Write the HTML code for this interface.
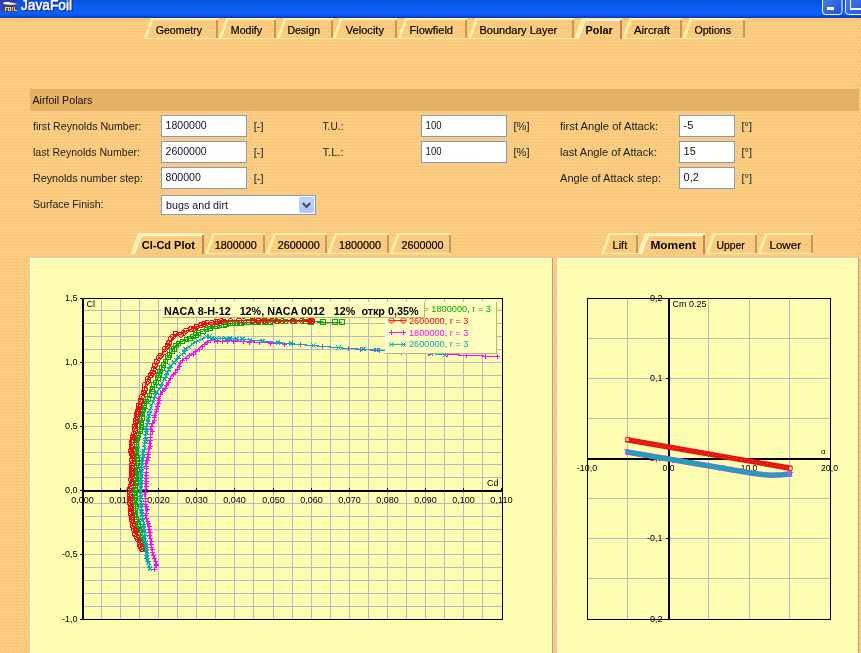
<!DOCTYPE html>
<html><head><meta charset="utf-8"><title>JavaFoil</title>
<style>html,body{margin:0;padding:0;background:#fccd80;overflow:hidden}svg{display:block;will-change:transform;opacity:0.9999}text{white-space:pre}</style>
</head><body>
<svg width="861" height="653" viewBox="0 0 861 653" font-family="'Liberation Sans', sans-serif" shape-rendering="crispEdges">
<defs>
<pattern id="dots" width="4" height="6" patternUnits="userSpaceOnUse"><rect width="4" height="6" fill="#fccd80"/><rect x="0" y="1" width="1" height="1" fill="#e8b870"/><rect x="2" y="4" width="1" height="1" fill="#e8b870"/></pattern>
<linearGradient id="tb" x1="0" y1="0" x2="0" y2="1"><stop offset="0" stop-color="#0650dc"/><stop offset="0.35" stop-color="#0a5cf0"/><stop offset="0.75" stop-color="#0b60f6"/><stop offset="0.88" stop-color="#0a50e0"/><stop offset="1" stop-color="#0634c0"/></linearGradient>
<linearGradient id="btn" x1="0" y1="0" x2="1" y2="1"><stop offset="0" stop-color="#4b84f0"/><stop offset="1" stop-color="#1c4fd8"/></linearGradient>
</defs>
<rect width="861" height="653" fill="url(#dots)"/>
<rect x="0" y="0" width="861" height="18" fill="url(#tb)"/>
<rect x="1" y="0" width="16" height="12" fill="#3b3f9c"/>
<path d="M2.9,3.4 C3.4,1.7 9,1.5 12,2.7 L16.4,3.7 L16.4,4.5 C12,4.7 6,5.1 2.9,3.4 Z" fill="#fff" shape-rendering="auto"/>
<g fill="#ffd21e"><rect x="5" y="7" width="1" height="4"/><rect x="6" y="7" width="2" height="1"/><rect x="6" y="9" width="1" height="1"/><rect x="8" y="7" width="3" height="1"/><rect x="8" y="10" width="3" height="1"/><rect x="8" y="8" width="1" height="2"/><rect x="10" y="8" width="1" height="2"/><rect x="12" y="7" width="1" height="4"/><rect x="14" y="7" width="1" height="4"/><rect x="15" y="10" width="2" height="1"/></g>
<text x="22" y="10.7" font-size="14" font-weight="normal" fill="#0a1f7a" text-anchor="start" textLength="51" lengthAdjust="spacingAndGlyphs" stroke="#0a1f7a" stroke-width="0.5">JavaFoil</text>
<text x="21" y="9.9" font-size="14" font-weight="normal" fill="#fff" text-anchor="start" textLength="51" lengthAdjust="spacingAndGlyphs" stroke="#fff" stroke-width="0.55">JavaFoil</text>
<rect x="822.5" y="-6" width="19.5" height="20.5" rx="3" fill="url(#btn)" stroke="#fff" stroke-width="1" shape-rendering="auto"/>
<rect x="827" y="7" width="7" height="3" fill="#fff"/>
<rect x="845.5" y="-6" width="22" height="20.5" rx="3" fill="url(#btn)" stroke="#fff" stroke-width="1" shape-rendering="auto"/>
<rect x="850.5" y="-3" width="14" height="12" fill="none" stroke="#fff" stroke-width="1.5"/>
<polygon points="143.5,39 151.0,18 154.0,18 146.5,39" fill="#fff2a6" shape-rendering="auto"/>
<rect x="151.0" y="18" width="67.0" height="2" fill="#fff2a6"/>
<rect x="216" y="20" width="2" height="19" fill="#bf9960"/>
<rect x="144.5" y="38" width="73.5" height="1" fill="#fff2a6"/>
<text x="155.8" y="33.5" font-size="11" font-weight="normal" fill="#000" text-anchor="start" textLength="46.2" lengthAdjust="spacingAndGlyphs" stroke="#000" stroke-width="0.2" >Geometry</text>
<polygon points="218.5,39 226.0,18 229.0,18 221.5,39" fill="#fff2a6" shape-rendering="auto"/>
<rect x="226.0" y="18" width="49.5" height="2" fill="#fff2a6"/>
<rect x="273.5" y="20" width="2" height="19" fill="#bf9960"/>
<rect x="219.5" y="38" width="56.0" height="1" fill="#fff2a6"/>
<text x="230.8" y="33.5" font-size="11" font-weight="normal" fill="#000" text-anchor="start" textLength="31.3" lengthAdjust="spacingAndGlyphs" stroke="#000" stroke-width="0.2" >Modify</text>
<polygon points="276.5,39 284.0,18 287.0,18 279.5,39" fill="#fff2a6" shape-rendering="auto"/>
<rect x="284.0" y="18" width="49.0" height="2" fill="#fff2a6"/>
<rect x="331" y="20" width="2" height="19" fill="#bf9960"/>
<rect x="277.5" y="38" width="55.5" height="1" fill="#fff2a6"/>
<text x="287.5" y="33.5" font-size="11" font-weight="normal" fill="#000" text-anchor="start" textLength="32.5" lengthAdjust="spacingAndGlyphs" stroke="#000" stroke-width="0.2" >Design</text>
<polygon points="332.5,39 340.0,18 343.0,18 335.5,39" fill="#fff2a6" shape-rendering="auto"/>
<rect x="340.0" y="18" width="57.0" height="2" fill="#fff2a6"/>
<rect x="395" y="20" width="2" height="19" fill="#bf9960"/>
<rect x="333.5" y="38" width="63.5" height="1" fill="#fff2a6"/>
<text x="345.8" y="33.5" font-size="11" font-weight="normal" fill="#000" text-anchor="start" textLength="38.2" lengthAdjust="spacingAndGlyphs" stroke="#000" stroke-width="0.2" >Velocity</text>
<polygon points="397.5,39 405.0,18 408.0,18 400.5,39" fill="#fff2a6" shape-rendering="auto"/>
<rect x="405.0" y="18" width="62.0" height="2" fill="#fff2a6"/>
<rect x="465" y="20" width="2" height="19" fill="#bf9960"/>
<rect x="398.5" y="38" width="68.5" height="1" fill="#fff2a6"/>
<text x="409.5" y="33.5" font-size="11" font-weight="normal" fill="#000" text-anchor="start" textLength="43.5" lengthAdjust="spacingAndGlyphs" stroke="#000" stroke-width="0.2" >Flowfield</text>
<polygon points="468,39 475.5,18 478.5,18 471.0,39" fill="#fff2a6" shape-rendering="auto"/>
<rect x="475.5" y="18" width="98.0" height="2" fill="#fff2a6"/>
<rect x="571.5" y="20" width="2" height="19" fill="#bf9960"/>
<rect x="469" y="38" width="104.5" height="1" fill="#fff2a6"/>
<text x="479.5" y="33.5" font-size="11" font-weight="normal" fill="#000" text-anchor="start" stroke="#000" stroke-width="0.2" >Boundary Layer</text>
<polygon points="574,39 581.5,18 584.9,18 577.4,39" fill="#fff2a6" shape-rendering="auto"/>
<line x1="577.6999999999999" y1="39" x2="585.1999999999999" y2="20" stroke="#ffffff" stroke-width="1.2" shape-rendering="auto"/>
<rect x="581.5" y="18" width="40.0" height="2" fill="#fff2a6"/>
<rect x="584.9" y="20" width="34.6" height="1" fill="#ffffff"/>
<rect x="619.5" y="20" width="2" height="19" fill="#b58e57"/>
<text x="585.5" y="33.5" font-size="11" font-weight="bold" fill="#000" text-anchor="start" textLength="27.2" lengthAdjust="spacingAndGlyphs" >Polar</text>
<polygon points="622,39 629.5,18 632.5,18 625.0,39" fill="#fff2a6" shape-rendering="auto"/>
<rect x="629.5" y="18" width="52.5" height="2" fill="#fff2a6"/>
<rect x="680" y="20" width="2" height="19" fill="#bf9960"/>
<rect x="623" y="38" width="59" height="1" fill="#fff2a6"/>
<text x="634" y="33.5" font-size="11" font-weight="normal" fill="#000" text-anchor="start" textLength="36" lengthAdjust="spacingAndGlyphs" stroke="#000" stroke-width="0.2" >Aircraft</text>
<polygon points="682,39 689.5,18 692.5,18 685.0,39" fill="#fff2a6" shape-rendering="auto"/>
<rect x="689.5" y="18" width="55.5" height="2" fill="#fff2a6"/>
<rect x="743" y="20" width="2" height="19" fill="#bf9960"/>
<rect x="683" y="38" width="62" height="1" fill="#fff2a6"/>
<text x="694.5" y="33.5" font-size="11" font-weight="normal" fill="#000" text-anchor="start" textLength="36.5" lengthAdjust="spacingAndGlyphs" stroke="#000" stroke-width="0.2" >Options</text>
<rect x="30" y="89" width="829" height="22" fill="#e5b162"/>
<text x="32.4" y="103.5" font-size="11" font-weight="normal" fill="#111" text-anchor="start" textLength="60" lengthAdjust="spacingAndGlyphs" >Airfoil Polars</text>
<text x="33" y="130" font-size="11" font-weight="normal" fill="#1c1c1c" text-anchor="start" textLength="108.2" lengthAdjust="spacingAndGlyphs" >first Reynolds Number:</text>
<rect x="161.5" y="115.5" width="85" height="21" fill="#fff" stroke="#7f9db9" stroke-width="1"/>
<text x="165.6" y="129.2" font-size="11" font-weight="normal" fill="#101030" text-anchor="start" textLength="41" lengthAdjust="spacingAndGlyphs" >1800000</text>
<text x="253.8" y="130" font-size="11" font-weight="normal" fill="#123" text-anchor="start" >[-]</text>
<text x="33" y="156" font-size="11" font-weight="normal" fill="#1c1c1c" text-anchor="start" textLength="107" lengthAdjust="spacingAndGlyphs" >last Reynolds Number:</text>
<rect x="161.5" y="141.5" width="85" height="21" fill="#fff" stroke="#7f9db9" stroke-width="1"/>
<text x="165.6" y="155.2" font-size="11" font-weight="normal" fill="#101030" text-anchor="start" textLength="41" lengthAdjust="spacingAndGlyphs" >2600000</text>
<text x="253.8" y="156" font-size="11" font-weight="normal" fill="#123" text-anchor="start" >[-]</text>
<text x="33" y="182" font-size="11" font-weight="normal" fill="#1c1c1c" text-anchor="start" textLength="110" lengthAdjust="spacingAndGlyphs" >Reynolds number step:</text>
<rect x="161.5" y="167.5" width="85" height="21" fill="#fff" stroke="#7f9db9" stroke-width="1"/>
<text x="165.6" y="181.2" font-size="11" font-weight="normal" fill="#101030" text-anchor="start" textLength="35.3" lengthAdjust="spacingAndGlyphs" >800000</text>
<text x="253.8" y="182" font-size="11" font-weight="normal" fill="#123" text-anchor="start" >[-]</text>
<text x="33" y="207.8" font-size="11" font-weight="normal" fill="#1c1c1c" text-anchor="start" textLength="70.5" lengthAdjust="spacingAndGlyphs" >Surface Finish:</text>
<rect x="161.5" y="195.5" width="154" height="19" fill="#fff" stroke="#7f9db9"/>
<text x="166" y="209" font-size="11" font-weight="normal" fill="#101030" text-anchor="start" textLength="62" lengthAdjust="spacingAndGlyphs" >bugs and dirt</text>
<linearGradient id="sb" x1="0" y1="0" x2="0" y2="1"><stop offset="0" stop-color="#c8d6fb"/><stop offset="1" stop-color="#b0c3f4"/></linearGradient>
<rect x="299.5" y="197.5" width="14" height="15" rx="1.5" fill="url(#sb)" stroke="#b9caf6" shape-rendering="auto"/>
<path d="M302.8,203 L306.5,207 L310.2,203" fill="none" stroke="#3d4d6f" stroke-width="2" shape-rendering="auto"/>
<text x="322.5" y="130" font-size="11" font-weight="normal" fill="#1c1c1c" text-anchor="start" textLength="21" lengthAdjust="spacingAndGlyphs" >T.U.:</text>
<rect x="421.5" y="115.5" width="85" height="21" fill="#fff" stroke="#7f9db9" stroke-width="1"/>
<text x="425.6" y="129.2" font-size="11" font-weight="normal" fill="#101030" text-anchor="start" textLength="16" lengthAdjust="spacingAndGlyphs" >100</text>
<text x="513.5" y="130" font-size="11" font-weight="normal" fill="#123" text-anchor="start" textLength="16" lengthAdjust="spacingAndGlyphs" >[%]</text>
<text x="322.5" y="156" font-size="11" font-weight="normal" fill="#1c1c1c" text-anchor="start" textLength="21" lengthAdjust="spacingAndGlyphs" >T.L.:</text>
<rect x="421.5" y="141.5" width="85" height="21" fill="#fff" stroke="#7f9db9" stroke-width="1"/>
<text x="425.6" y="155.2" font-size="11" font-weight="normal" fill="#101030" text-anchor="start" textLength="16" lengthAdjust="spacingAndGlyphs" >100</text>
<text x="513.5" y="156" font-size="11" font-weight="normal" fill="#123" text-anchor="start" textLength="16" lengthAdjust="spacingAndGlyphs" >[%]</text>
<text x="560" y="130" font-size="11" font-weight="normal" fill="#1c1c1c" text-anchor="start" textLength="98.1" lengthAdjust="spacingAndGlyphs" >first Angle of Attack:</text>
<rect x="679.5" y="115.5" width="55" height="21" fill="#fff" stroke="#7f9db9" stroke-width="1"/>
<text x="683.6" y="129.2" font-size="11" font-weight="normal" fill="#101030" text-anchor="start" >-5</text>
<text x="741.5" y="130" font-size="11" font-weight="normal" fill="#123" text-anchor="start" >[°]</text>
<text x="560" y="156" font-size="11" font-weight="normal" fill="#1c1c1c" text-anchor="start" textLength="97" lengthAdjust="spacingAndGlyphs" >last Angle of Attack:</text>
<rect x="679.5" y="141.5" width="55" height="21" fill="#fff" stroke="#7f9db9" stroke-width="1"/>
<text x="683.6" y="155.2" font-size="11" font-weight="normal" fill="#101030" text-anchor="start" >15</text>
<text x="741.5" y="156" font-size="11" font-weight="normal" fill="#123" text-anchor="start" >[°]</text>
<text x="560" y="182" font-size="11" font-weight="normal" fill="#1c1c1c" text-anchor="start" textLength="101" lengthAdjust="spacingAndGlyphs" >Angle of Attack step:</text>
<rect x="679.5" y="167.5" width="55" height="21" fill="#fff" stroke="#7f9db9" stroke-width="1"/>
<text x="683.6" y="181.2" font-size="11" font-weight="normal" fill="#101030" text-anchor="start" >0,2</text>
<text x="741.5" y="182" font-size="11" font-weight="normal" fill="#123" text-anchor="start" >[°]</text>
<polygon points="130.5,254 138.0,233 141.4,233 133.9,254" fill="#fff2a6" shape-rendering="auto"/>
<line x1="134.20000000000002" y1="254" x2="141.70000000000002" y2="235" stroke="#ffffff" stroke-width="1.2" shape-rendering="auto"/>
<rect x="138.0" y="233" width="66.0" height="2" fill="#fff2a6"/>
<rect x="141.4" y="235" width="60.6" height="1" fill="#ffffff"/>
<rect x="202" y="235" width="2" height="19" fill="#b58e57"/>
<text x="141.8" y="248.8" font-size="11" font-weight="bold" fill="#000" text-anchor="start" textLength="53" lengthAdjust="spacingAndGlyphs" >Cl-Cd Plot</text>
<polygon points="205,254 212.5,233 215.5,233 208.0,254" fill="#fff2a6" shape-rendering="auto"/>
<rect x="212.5" y="233" width="52.0" height="2" fill="#fff2a6"/>
<rect x="262.5" y="235" width="2" height="19" fill="#bf9960"/>
<rect x="206" y="253" width="58.5" height="1" fill="#fff2a6"/>
<text x="214.7" y="248.8" font-size="11" font-weight="normal" fill="#000" text-anchor="start" textLength="42" lengthAdjust="spacingAndGlyphs" stroke="#000" stroke-width="0.2" >1800000</text>
<polygon points="266,254 273.5,233 276.5,233 269.0,254" fill="#fff2a6" shape-rendering="auto"/>
<rect x="273.5" y="233" width="53.5" height="2" fill="#fff2a6"/>
<rect x="325" y="235" width="2" height="19" fill="#bf9960"/>
<rect x="267" y="253" width="60" height="1" fill="#fff2a6"/>
<text x="277.7" y="248.8" font-size="11" font-weight="normal" fill="#000" text-anchor="start" textLength="42" lengthAdjust="spacingAndGlyphs" stroke="#000" stroke-width="0.2" >2600000</text>
<polygon points="327,254 334.5,233 337.5,233 330.0,254" fill="#fff2a6" shape-rendering="auto"/>
<rect x="334.5" y="233" width="54.0" height="2" fill="#fff2a6"/>
<rect x="386.5" y="235" width="2" height="19" fill="#bf9960"/>
<rect x="328" y="253" width="60.5" height="1" fill="#fff2a6"/>
<text x="339" y="248.8" font-size="11" font-weight="normal" fill="#000" text-anchor="start" textLength="42" lengthAdjust="spacingAndGlyphs" stroke="#000" stroke-width="0.2" >1800000</text>
<polygon points="389.5,254 397.0,233 400.0,233 392.5,254" fill="#fff2a6" shape-rendering="auto"/>
<rect x="397.0" y="233" width="54.0" height="2" fill="#fff2a6"/>
<rect x="449" y="235" width="2" height="19" fill="#bf9960"/>
<rect x="390.5" y="253" width="60.5" height="1" fill="#fff2a6"/>
<text x="401.5" y="248.8" font-size="11" font-weight="normal" fill="#000" text-anchor="start" textLength="42" lengthAdjust="spacingAndGlyphs" stroke="#000" stroke-width="0.2" >2600000</text>
<polygon points="601,254 608.5,233 611.5,233 604.0,254" fill="#fff2a6" shape-rendering="auto"/>
<rect x="608.5" y="233" width="29.0" height="2" fill="#fff2a6"/>
<rect x="635.5" y="235" width="2" height="19" fill="#bf9960"/>
<rect x="602" y="253" width="35.5" height="1" fill="#fff2a6"/>
<text x="612.6" y="248.8" font-size="11" font-weight="normal" fill="#000" text-anchor="start" textLength="14.6" lengthAdjust="spacingAndGlyphs" stroke="#000" stroke-width="0.2" >Lift</text>
<polygon points="637.5,254 645.0,233 648.4,233 640.9,254" fill="#fff2a6" shape-rendering="auto"/>
<line x1="641.1999999999999" y1="254" x2="648.6999999999999" y2="235" stroke="#ffffff" stroke-width="1.2" shape-rendering="auto"/>
<rect x="645.0" y="233" width="60.0" height="2" fill="#fff2a6"/>
<rect x="648.4" y="235" width="54.6" height="1" fill="#ffffff"/>
<rect x="703" y="235" width="2" height="19" fill="#b58e57"/>
<text x="650.4" y="248.8" font-size="11" font-weight="bold" fill="#000" text-anchor="start" textLength="45.6" lengthAdjust="spacingAndGlyphs" >Moment</text>
<polygon points="705.5,254 713.0,233 716.0,233 708.5,254" fill="#fff2a6" shape-rendering="auto"/>
<rect x="713.0" y="233" width="44.0" height="2" fill="#fff2a6"/>
<rect x="755" y="235" width="2" height="19" fill="#bf9960"/>
<rect x="706.5" y="253" width="50.5" height="1" fill="#fff2a6"/>
<text x="716.4" y="248.8" font-size="11" font-weight="normal" fill="#000" text-anchor="start" textLength="28.3" lengthAdjust="spacingAndGlyphs" stroke="#000" stroke-width="0.2" >Upper</text>
<polygon points="757.5,254 765.0,233 768.0,233 760.5,254" fill="#fff2a6" shape-rendering="auto"/>
<rect x="765.0" y="233" width="48.0" height="2" fill="#fff2a6"/>
<rect x="811" y="235" width="2" height="19" fill="#bf9960"/>
<rect x="758.5" y="253" width="54.5" height="1" fill="#fff2a6"/>
<text x="769.5" y="248.8" font-size="11" font-weight="normal" fill="#000" text-anchor="start" textLength="31.5" lengthAdjust="spacingAndGlyphs" stroke="#000" stroke-width="0.2" >Lower</text>
<rect x="30" y="258" width="523" height="400" fill="#fdfdb2"/>
<rect x="30" y="258" width="523" height="1" fill="#fff"/><rect x="30" y="258" width="1" height="400" fill="#fff"/><rect x="552" y="258" width="1" height="400" fill="#a8a878"/>
<rect x="557" y="258" width="302" height="400" fill="#fdfdb2"/>
<rect x="557" y="258" width="302" height="1" fill="#fff"/><rect x="557" y="258" width="1" height="400" fill="#fff"/><rect x="858" y="258" width="1" height="400" fill="#b0a878"/>
<rect x="101" y="298" width="1" height="321" fill="#b9b9c6"/>
<rect x="120" y="298" width="1" height="321" fill="#b9b9c6"/>
<rect x="139" y="298" width="1" height="321" fill="#b9b9c6"/>
<rect x="158" y="298" width="1" height="321" fill="#b9b9c6"/>
<rect x="177" y="298" width="1" height="321" fill="#b9b9c6"/>
<rect x="196" y="298" width="1" height="321" fill="#b9b9c6"/>
<rect x="215" y="298" width="1" height="321" fill="#b9b9c6"/>
<rect x="234" y="298" width="1" height="321" fill="#b9b9c6"/>
<rect x="253" y="298" width="1" height="321" fill="#b9b9c6"/>
<rect x="273" y="298" width="1" height="321" fill="#b9b9c6"/>
<rect x="292" y="298" width="1" height="321" fill="#b9b9c6"/>
<rect x="311" y="298" width="1" height="321" fill="#b9b9c6"/>
<rect x="330" y="298" width="1" height="321" fill="#b9b9c6"/>
<rect x="349" y="298" width="1" height="321" fill="#b9b9c6"/>
<rect x="368" y="298" width="1" height="321" fill="#b9b9c6"/>
<rect x="387" y="298" width="1" height="321" fill="#b9b9c6"/>
<rect x="406" y="298" width="1" height="321" fill="#b9b9c6"/>
<rect x="425" y="298" width="1" height="321" fill="#b9b9c6"/>
<rect x="444" y="298" width="1" height="321" fill="#b9b9c6"/>
<rect x="463" y="298" width="1" height="321" fill="#b9b9c6"/>
<rect x="482" y="298" width="1" height="321" fill="#b9b9c6"/>
<rect x="83" y="310" width="419" height="1" fill="#b9b9c6"/>
<rect x="83" y="323" width="419" height="1" fill="#b9b9c6"/>
<rect x="83" y="336" width="419" height="1" fill="#b9b9c6"/>
<rect x="83" y="349" width="419" height="1" fill="#b9b9c6"/>
<rect x="83" y="362" width="419" height="1" fill="#b9b9c6"/>
<rect x="83" y="375" width="419" height="1" fill="#b9b9c6"/>
<rect x="83" y="387" width="419" height="1" fill="#b9b9c6"/>
<rect x="83" y="400" width="419" height="1" fill="#b9b9c6"/>
<rect x="83" y="413" width="419" height="1" fill="#b9b9c6"/>
<rect x="83" y="426" width="419" height="1" fill="#b9b9c6"/>
<rect x="83" y="439" width="419" height="1" fill="#b9b9c6"/>
<rect x="83" y="452" width="419" height="1" fill="#b9b9c6"/>
<rect x="83" y="464" width="419" height="1" fill="#b9b9c6"/>
<rect x="83" y="477" width="419" height="1" fill="#b9b9c6"/>
<rect x="83" y="490" width="419" height="1" fill="#b9b9c6"/>
<rect x="83" y="503" width="419" height="1" fill="#b9b9c6"/>
<rect x="83" y="516" width="419" height="1" fill="#b9b9c6"/>
<rect x="83" y="529" width="419" height="1" fill="#b9b9c6"/>
<rect x="83" y="541" width="419" height="1" fill="#b9b9c6"/>
<rect x="83" y="554" width="419" height="1" fill="#b9b9c6"/>
<rect x="83" y="567" width="419" height="1" fill="#b9b9c6"/>
<rect x="83" y="580" width="419" height="1" fill="#b9b9c6"/>
<rect x="83" y="593" width="419" height="1" fill="#b9b9c6"/>
<rect x="83" y="606" width="419" height="1" fill="#b9b9c6"/>
<rect x="83" y="619" width="419" height="1" fill="#b9b9c6"/>
<rect x="82" y="298" width="421" height="1" fill="#000"/>
<rect x="82" y="619" width="421" height="1" fill="#000"/>
<rect x="502" y="298" width="1" height="322" fill="#000"/>
<rect x="82" y="298" width="2" height="322" fill="#000"/>
<rect x="82" y="490" width="421" height="2" fill="#000"/>
<rect x="80" y="298" width="2" height="1" fill="#000"/>
<text transform="translate(77.5,301) scale(0.94,1)" font-size="9.6" font-weight="normal" fill="#000" text-anchor="end" >1,5</text>
<rect x="80" y="362" width="2" height="1" fill="#000"/>
<text transform="translate(77.5,365) scale(0.94,1)" font-size="9.6" font-weight="normal" fill="#000" text-anchor="end" >1,0</text>
<rect x="80" y="426" width="2" height="1" fill="#000"/>
<text transform="translate(77.5,429) scale(0.94,1)" font-size="9.6" font-weight="normal" fill="#000" text-anchor="end" >0,5</text>
<rect x="80" y="490" width="2" height="1" fill="#000"/>
<text transform="translate(77.5,493) scale(0.94,1)" font-size="9.6" font-weight="normal" fill="#000" text-anchor="end" >0,0</text>
<rect x="80" y="554" width="2" height="1" fill="#000"/>
<text transform="translate(77.5,557) scale(0.94,1)" font-size="9.6" font-weight="normal" fill="#000" text-anchor="end" >-0,5</text>
<rect x="80" y="619" width="2" height="1" fill="#000"/>
<text transform="translate(77.5,622) scale(0.94,1)" font-size="9.6" font-weight="normal" fill="#000" text-anchor="end" >-1,0</text>
<rect x="82" y="488" width="1" height="2" fill="#000"/>
<text transform="translate(82.5,503) scale(0.94,1)" font-size="9.6" font-weight="normal" fill="#000" text-anchor="middle" textLength="23.94" lengthAdjust="spacingAndGlyphs" >0,000</text>
<rect x="120" y="488" width="1" height="2" fill="#000"/>
<text transform="translate(120.5,503) scale(0.94,1)" font-size="9.6" font-weight="normal" fill="#000" text-anchor="middle" textLength="23.94" lengthAdjust="spacingAndGlyphs" >0,010</text>
<rect x="158" y="488" width="1" height="2" fill="#000"/>
<text transform="translate(158.5,503) scale(0.94,1)" font-size="9.6" font-weight="normal" fill="#000" text-anchor="middle" textLength="23.94" lengthAdjust="spacingAndGlyphs" >0,020</text>
<rect x="196" y="488" width="1" height="2" fill="#000"/>
<text transform="translate(196.5,503) scale(0.94,1)" font-size="9.6" font-weight="normal" fill="#000" text-anchor="middle" textLength="23.94" lengthAdjust="spacingAndGlyphs" >0,030</text>
<rect x="234" y="488" width="1" height="2" fill="#000"/>
<text transform="translate(234.5,503) scale(0.94,1)" font-size="9.6" font-weight="normal" fill="#000" text-anchor="middle" textLength="23.94" lengthAdjust="spacingAndGlyphs" >0,040</text>
<rect x="273" y="488" width="1" height="2" fill="#000"/>
<text transform="translate(273.5,503) scale(0.94,1)" font-size="9.6" font-weight="normal" fill="#000" text-anchor="middle" textLength="23.94" lengthAdjust="spacingAndGlyphs" >0,050</text>
<rect x="311" y="488" width="1" height="2" fill="#000"/>
<text transform="translate(311.5,503) scale(0.94,1)" font-size="9.6" font-weight="normal" fill="#000" text-anchor="middle" textLength="23.94" lengthAdjust="spacingAndGlyphs" >0,060</text>
<rect x="349" y="488" width="1" height="2" fill="#000"/>
<text transform="translate(349.5,503) scale(0.94,1)" font-size="9.6" font-weight="normal" fill="#000" text-anchor="middle" textLength="23.94" lengthAdjust="spacingAndGlyphs" >0,070</text>
<rect x="387" y="488" width="1" height="2" fill="#000"/>
<text transform="translate(387.5,503) scale(0.94,1)" font-size="9.6" font-weight="normal" fill="#000" text-anchor="middle" textLength="23.94" lengthAdjust="spacingAndGlyphs" >0,080</text>
<rect x="425" y="488" width="1" height="2" fill="#000"/>
<text transform="translate(425.5,503) scale(0.94,1)" font-size="9.6" font-weight="normal" fill="#000" text-anchor="middle" textLength="23.94" lengthAdjust="spacingAndGlyphs" >0,090</text>
<rect x="463" y="488" width="1" height="2" fill="#000"/>
<text transform="translate(463.5,503) scale(0.94,1)" font-size="9.6" font-weight="normal" fill="#000" text-anchor="middle" textLength="23.94" lengthAdjust="spacingAndGlyphs" >0,100</text>
<rect x="501" y="488" width="1" height="2" fill="#000"/>
<text transform="translate(501.5,503) scale(0.94,1)" font-size="9.6" font-weight="normal" fill="#000" text-anchor="middle" textLength="23.94" lengthAdjust="spacingAndGlyphs" >0,110</text>
<text transform="translate(86.5,307) scale(0.94,1)" font-size="9.6" font-weight="normal" fill="#000" text-anchor="start" >Cl</text>
<text transform="translate(487,485.5) scale(0.94,1)" font-size="9.6" font-weight="normal" fill="#000" text-anchor="start" >Cd</text>
<g shape-rendering="crispEdges">
<polyline points="146,548.9 141.4,538.2 137.6,524.4 135.3,506 134.5,492.2 136,481.5 136,478.8 136.8,463.5 136,451.2 136.8,440.5 140.6,426.7 141.4,416 144.4,403.8 149.8,394.5 155.9,382.7 160.5,370.4 165.1,361.2 170.5,352.8 175.8,345.9 181.9,341.3 188.1,339 195,335.5 201.8,331.4 209.5,328.3 217.1,326 226.3,324.2 243.5,322.5 268.6,321.6 300,321.6 319.3,322 329.8,322.2 342,322.2" fill="none" stroke="#08a808" stroke-width="1.1"/>
<g fill="none" stroke="#08a808" stroke-width="1"><rect x="143.3" y="547.3" width="4.4" height="4.4"/><rect x="141.8" y="543.8" width="4.4" height="4.4"/><rect x="140.8" y="541.3" width="4.4" height="4.4"/><rect x="140.3" y="538.8" width="4.4" height="4.4"/><rect x="139.8" y="535.8" width="4.4" height="4.4"/><rect x="137.8" y="532.8" width="4.4" height="4.4"/><rect x="137.8" y="530.3" width="4.4" height="4.4"/><rect x="136.8" y="527.8" width="4.4" height="4.4"/><rect x="136.3" y="524.3" width="4.4" height="4.4"/><rect x="136.3" y="522.3" width="4.4" height="4.4"/><rect x="134.8" y="519.8" width="4.4" height="4.4"/><rect x="134.3" y="516.8" width="4.4" height="4.4"/><rect x="133.3" y="513.3" width="4.4" height="4.4"/><rect x="133.3" y="510.3" width="4.4" height="4.4"/><rect x="132.8" y="508.3" width="4.4" height="4.4"/><rect x="133.8" y="504.3" width="4.4" height="4.4"/><rect x="132.8" y="502.3" width="4.4" height="4.4"/><rect x="132.3" y="498.8" width="4.4" height="4.4"/><rect x="133.3" y="495.8" width="4.4" height="4.4"/><rect x="132.8" y="492.8" width="4.4" height="4.4"/><rect x="132.3" y="490.3" width="4.4" height="4.4"/><rect x="133.3" y="487.3" width="4.4" height="4.4"/><rect x="133.3" y="484.3" width="4.4" height="4.4"/><rect x="134.3" y="481.3" width="4.4" height="4.4"/><rect x="133.8" y="478.8" width="4.4" height="4.4"/><rect x="132.8" y="475.8" width="4.4" height="4.4"/><rect x="134.3" y="473.3" width="4.4" height="4.4"/><rect x="133.3" y="469.8" width="4.4" height="4.4"/><rect x="135.3" y="467.8" width="4.4" height="4.4"/><rect x="134.3" y="463.8" width="4.4" height="4.4"/><rect x="135.3" y="461.3" width="4.4" height="4.4"/><rect x="135.3" y="458.8" width="4.4" height="4.4"/><rect x="134.8" y="455.8" width="4.4" height="4.4"/><rect x="134.3" y="453.3" width="4.4" height="4.4"/><rect x="133.3" y="449.8" width="4.4" height="4.4"/><rect x="133.8" y="447.3" width="4.4" height="4.4"/><rect x="134.3" y="444.3" width="4.4" height="4.4"/><rect x="134.3" y="441.8" width="4.4" height="4.4"/><rect x="133.8" y="438.3" width="4.4" height="4.4"/><rect x="134.8" y="435.8" width="4.4" height="4.4"/><rect x="136.3" y="432.8" width="4.4" height="4.4"/><rect x="137.8" y="429.3" width="4.4" height="4.4"/><rect x="137.8" y="427.3" width="4.4" height="4.4"/><rect x="139.3" y="424.8" width="4.4" height="4.4"/><rect x="139.3" y="421.3" width="4.4" height="4.4"/><rect x="137.8" y="418.3" width="4.4" height="4.4"/><rect x="139.8" y="415.8" width="4.4" height="4.4"/><rect x="138.8" y="412.3" width="4.4" height="4.4"/><rect x="140.3" y="409.8" width="4.4" height="4.4"/><rect x="140.8" y="407.3" width="4.4" height="4.4"/><rect x="142.3" y="403.8" width="4.4" height="4.4"/><rect x="142.3" y="401.3" width="4.4" height="4.4"/><rect x="143.8" y="399.3" width="4.4" height="4.4"/><rect x="145.8" y="396.8" width="4.4" height="4.4"/><rect x="147.3" y="393.3" width="4.4" height="4.4"/><rect x="149.8" y="389.3" width="4.4" height="4.4"/><rect x="150.3" y="386.8" width="4.4" height="4.4"/><rect x="151.8" y="382.8" width="4.4" height="4.4"/><rect x="153.8" y="380.3" width="4.4" height="4.4"/><rect x="155.8" y="375.8" width="4.4" height="4.4"/><rect x="156.8" y="372.8" width="4.4" height="4.4"/><rect x="157.8" y="369.3" width="4.4" height="4.4"/><rect x="159.8" y="365.8" width="4.4" height="4.4"/><rect x="161.3" y="362.8" width="4.4" height="4.4"/><rect x="163.3" y="359.3" width="4.4" height="4.4"/><rect x="165.8" y="355.3" width="4.4" height="4.4"/><rect x="167.3" y="352.8" width="4.4" height="4.4"/><rect x="169.8" y="348.8" width="4.4" height="4.4"/><rect x="171.8" y="346.8" width="4.4" height="4.4"/><rect x="173.8" y="343.3" width="4.4" height="4.4"/><rect x="176.3" y="341.3" width="4.4" height="4.4"/><rect x="180.3" y="339.3" width="4.4" height="4.4"/><rect x="184.3" y="337.3" width="4.4" height="4.4"/><rect x="187.8" y="336.3" width="4.4" height="4.4"/><rect x="190.8" y="334.3" width="4.4" height="4.4"/><rect x="193.8" y="332.8" width="4.4" height="4.4"/><rect x="196.3" y="330.8" width="4.4" height="4.4"/><rect x="200.8" y="329.3" width="4.4" height="4.4"/><rect x="204.3" y="327.3" width="4.4" height="4.4"/><rect x="207.8" y="326.3" width="4.4" height="4.4"/><rect x="210.3" y="324.3" width="4.4" height="4.4"/><rect x="214.8" y="324.3" width="4.4" height="4.4"/><rect x="217.3" y="322.8" width="4.4" height="4.4"/><rect x="221.8" y="322.8" width="4.4" height="4.4"/><rect x="223.8" y="321.8" width="4.4" height="4.4"/><rect x="227.8" y="321.3" width="4.4" height="4.4"/><rect x="230.3" y="321.3" width="4.4" height="4.4"/><rect x="232.8" y="321.3" width="4.4" height="4.4"/><rect x="235.3" y="320.8" width="4.4" height="4.4"/><rect x="238.8" y="320.8" width="4.4" height="4.4"/><rect x="241.8" y="320.3" width="4.4" height="4.4"/><rect x="246.3" y="319.8" width="4.4" height="4.4"/><rect x="251.8" y="319.8" width="4.4" height="4.4"/><rect x="256.3" y="320.3" width="4.4" height="4.4"/><rect x="262.8" y="319.8" width="4.4" height="4.4"/><rect x="268.3" y="319.8" width="4.4" height="4.4"/><rect x="275.3" y="319.3" width="4.4" height="4.4"/><rect x="283.3" y="319.3" width="4.4" height="4.4"/><rect x="291.8" y="319.3" width="4.4" height="4.4"/><rect x="302.8" y="319.3" width="4.4" height="4.4"/><rect x="308.8" y="319.8" width="4.4" height="4.4"/><rect x="320.8" y="319.8" width="4.4" height="4.4"/><rect x="332.8" y="319.8" width="4.4" height="4.4"/><rect x="339.8" y="319.8" width="4.4" height="4.4"/></g>
<polyline points="142.9,549.6 139.8,544.3 136.8,536.6 132.2,524.4 130.7,506 129.3,489.5 131.4,481.5 131.4,475.7 132.2,458.9 130.7,446.6 132.2,439 135.3,426.7 136,416 139.1,403.8 142.5,395 146,383.4 148.3,378 152.9,371.2 157.5,359.7 162.8,353.6 167.4,345.9 171.2,340 176.6,333.7 179.6,334.9 185.8,331.4 192.7,328.3 200.3,325.3 209.5,322.7 220.2,321.2 230,320.6 250,320.5 280,320.8 312,321" fill="none" stroke="#fa0505" stroke-width="1.1"/>
<g fill="none" stroke="#fa0505" stroke-width="1"><path d="M141.0,546.5h2l1.5,1.5v2l-1.5,1.5h-2l-1.5,-1.5v-2z"/><path d="M139.5,544.5h2l1.5,1.5v2l-1.5,1.5h-2l-1.5,-1.5v-2z"/><path d="M138.5,542.5h2l1.5,1.5v2l-1.5,1.5h-2l-1.5,-1.5v-2z"/><path d="M138.5,539.5h2l1.5,1.5v2l-1.5,1.5h-2l-1.5,-1.5v-2z"/><path d="M137.0,537.0h2l1.5,1.5v2l-1.5,1.5h-2l-1.5,-1.5v-2z"/><path d="M135.5,534.5h2l1.5,1.5v2l-1.5,1.5h-2l-1.5,-1.5v-2z"/><path d="M134.0,531.5h2l1.5,1.5v2l-1.5,1.5h-2l-1.5,-1.5v-2z"/><path d="M134.5,528.0h2l1.5,1.5v2l-1.5,1.5h-2l-1.5,-1.5v-2z"/><path d="M132.5,526.5h2l1.5,1.5v2l-1.5,1.5h-2l-1.5,-1.5v-2z"/><path d="M131.5,523.5h2l1.5,1.5v2l-1.5,1.5h-2l-1.5,-1.5v-2z"/><path d="M131.5,520.5h2l1.5,1.5v2l-1.5,1.5h-2l-1.5,-1.5v-2z"/><path d="M131.0,517.5h2l1.5,1.5v2l-1.5,1.5h-2l-1.5,-1.5v-2z"/><path d="M131.0,514.5h2l1.5,1.5v2l-1.5,1.5h-2l-1.5,-1.5v-2z"/><path d="M129.5,511.5h2l1.5,1.5v2l-1.5,1.5h-2l-1.5,-1.5v-2z"/><path d="M130.0,509.0h2l1.5,1.5v2l-1.5,1.5h-2l-1.5,-1.5v-2z"/><path d="M130.0,506.0h2l1.5,1.5v2l-1.5,1.5h-2l-1.5,-1.5v-2z"/><path d="M129.5,503.5h2l1.5,1.5v2l-1.5,1.5h-2l-1.5,-1.5v-2z"/><path d="M129.0,500.5h2l1.5,1.5v2l-1.5,1.5h-2l-1.5,-1.5v-2z"/><path d="M129.0,497.0h2l1.5,1.5v2l-1.5,1.5h-2l-1.5,-1.5v-2z"/><path d="M128.5,494.0h2l1.5,1.5v2l-1.5,1.5h-2l-1.5,-1.5v-2z"/><path d="M128.5,491.5h2l1.5,1.5v2l-1.5,1.5h-2l-1.5,-1.5v-2z"/><path d="M128.0,488.0h2l1.5,1.5v2l-1.5,1.5h-2l-1.5,-1.5v-2z"/><path d="M129.0,486.0h2l1.5,1.5v2l-1.5,1.5h-2l-1.5,-1.5v-2z"/><path d="M129.5,483.5h2l1.5,1.5v2l-1.5,1.5h-2l-1.5,-1.5v-2z"/><path d="M131.0,480.5h2l1.5,1.5v2l-1.5,1.5h-2l-1.5,-1.5v-2z"/><path d="M130.0,477.0h2l1.5,1.5v2l-1.5,1.5h-2l-1.5,-1.5v-2z"/><path d="M130.5,474.5h2l1.5,1.5v2l-1.5,1.5h-2l-1.5,-1.5v-2z"/><path d="M131.0,471.5h2l1.5,1.5v2l-1.5,1.5h-2l-1.5,-1.5v-2z"/><path d="M131.0,468.5h2l1.5,1.5v2l-1.5,1.5h-2l-1.5,-1.5v-2z"/><path d="M131.0,465.5h2l1.5,1.5v2l-1.5,1.5h-2l-1.5,-1.5v-2z"/><path d="M130.5,462.5h2l1.5,1.5v2l-1.5,1.5h-2l-1.5,-1.5v-2z"/><path d="M132.0,460.0h2l1.5,1.5v2l-1.5,1.5h-2l-1.5,-1.5v-2z"/><path d="M131.0,457.5h2l1.5,1.5v2l-1.5,1.5h-2l-1.5,-1.5v-2z"/><path d="M131.5,453.5h2l1.5,1.5v2l-1.5,1.5h-2l-1.5,-1.5v-2z"/><path d="M130.5,451.0h2l1.5,1.5v2l-1.5,1.5h-2l-1.5,-1.5v-2z"/><path d="M130.0,448.5h2l1.5,1.5v2l-1.5,1.5h-2l-1.5,-1.5v-2z"/><path d="M130.5,445.5h2l1.5,1.5v2l-1.5,1.5h-2l-1.5,-1.5v-2z"/><path d="M131.0,442.5h2l1.5,1.5v2l-1.5,1.5h-2l-1.5,-1.5v-2z"/><path d="M130.5,439.5h2l1.5,1.5v2l-1.5,1.5h-2l-1.5,-1.5v-2z"/><path d="M131.5,437.5h2l1.5,1.5v2l-1.5,1.5h-2l-1.5,-1.5v-2z"/><path d="M132.0,434.5h2l1.5,1.5v2l-1.5,1.5h-2l-1.5,-1.5v-2z"/><path d="M132.5,431.5h2l1.5,1.5v2l-1.5,1.5h-2l-1.5,-1.5v-2z"/><path d="M134.0,428.0h2l1.5,1.5v2l-1.5,1.5h-2l-1.5,-1.5v-2z"/><path d="M134.0,426.0h2l1.5,1.5v2l-1.5,1.5h-2l-1.5,-1.5v-2z"/><path d="M134.0,423.0h2l1.5,1.5v2l-1.5,1.5h-2l-1.5,-1.5v-2z"/><path d="M134.5,420.0h2l1.5,1.5v2l-1.5,1.5h-2l-1.5,-1.5v-2z"/><path d="M135.0,417.0h2l1.5,1.5v2l-1.5,1.5h-2l-1.5,-1.5v-2z"/><path d="M136.0,414.5h2l1.5,1.5v2l-1.5,1.5h-2l-1.5,-1.5v-2z"/><path d="M136.0,411.5h2l1.5,1.5v2l-1.5,1.5h-2l-1.5,-1.5v-2z"/><path d="M136.5,409.0h2l1.5,1.5v2l-1.5,1.5h-2l-1.5,-1.5v-2z"/><path d="M137.5,406.0h2l1.5,1.5v2l-1.5,1.5h-2l-1.5,-1.5v-2z"/><path d="M137.5,403.0h2l1.5,1.5v2l-1.5,1.5h-2l-1.5,-1.5v-2z"/><path d="M139.5,399.5h2l1.5,1.5v2l-1.5,1.5h-2l-1.5,-1.5v-2z"/><path d="M139.5,398.0h2l1.5,1.5v2l-1.5,1.5h-2l-1.5,-1.5v-2z"/><path d="M141.0,394.0h2l1.5,1.5v2l-1.5,1.5h-2l-1.5,-1.5v-2z"/><path d="M142.5,390.0h2l1.5,1.5v2l-1.5,1.5h-2l-1.5,-1.5v-2z"/><path d="M143.5,387.0h2l1.5,1.5v2l-1.5,1.5h-2l-1.5,-1.5v-2z"/><path d="M143.5,382.5h2l1.5,1.5v2l-1.5,1.5h-2l-1.5,-1.5v-2z"/><path d="M146.5,379.0h2l1.5,1.5v2l-1.5,1.5h-2l-1.5,-1.5v-2z"/><path d="M146.5,376.5h2l1.5,1.5v2l-1.5,1.5h-2l-1.5,-1.5v-2z"/><path d="M150.0,372.5h2l1.5,1.5v2l-1.5,1.5h-2l-1.5,-1.5v-2z"/><path d="M151.5,370.0h2l1.5,1.5v2l-1.5,1.5h-2l-1.5,-1.5v-2z"/><path d="M152.5,366.5h2l1.5,1.5v2l-1.5,1.5h-2l-1.5,-1.5v-2z"/><path d="M153.5,363.0h2l1.5,1.5v2l-1.5,1.5h-2l-1.5,-1.5v-2z"/><path d="M155.5,359.0h2l1.5,1.5v2l-1.5,1.5h-2l-1.5,-1.5v-2z"/><path d="M157.5,355.5h2l1.5,1.5v2l-1.5,1.5h-2l-1.5,-1.5v-2z"/><path d="M159.5,353.0h2l1.5,1.5v2l-1.5,1.5h-2l-1.5,-1.5v-2z"/><path d="M163.5,349.5h2l1.5,1.5v2l-1.5,1.5h-2l-1.5,-1.5v-2z"/><path d="M163.5,346.5h2l1.5,1.5v2l-1.5,1.5h-2l-1.5,-1.5v-2z"/><path d="M166.5,343.0h2l1.5,1.5v2l-1.5,1.5h-2l-1.5,-1.5v-2z"/><path d="M168.0,340.5h2l1.5,1.5v2l-1.5,1.5h-2l-1.5,-1.5v-2z"/><path d="M169.5,336.5h2l1.5,1.5v2l-1.5,1.5h-2l-1.5,-1.5v-2z"/><path d="M172.0,334.0h2l1.5,1.5v2l-1.5,1.5h-2l-1.5,-1.5v-2z"/><path d="M174.5,331.0h2l1.5,1.5v2l-1.5,1.5h-2l-1.5,-1.5v-2z"/><path d="M180.0,332.0h2l1.5,1.5v2l-1.5,1.5h-2l-1.5,-1.5v-2z"/><path d="M182.5,330.5h2l1.5,1.5v2l-1.5,1.5h-2l-1.5,-1.5v-2z"/><path d="M185.0,328.0h2l1.5,1.5v2l-1.5,1.5h-2l-1.5,-1.5v-2z"/><path d="M190.0,326.5h2l1.5,1.5v2l-1.5,1.5h-2l-1.5,-1.5v-2z"/><path d="M193.0,326.0h2l1.5,1.5v2l-1.5,1.5h-2l-1.5,-1.5v-2z"/><path d="M195.5,324.0h2l1.5,1.5v2l-1.5,1.5h-2l-1.5,-1.5v-2z"/><path d="M200.0,322.5h2l1.5,1.5v2l-1.5,1.5h-2l-1.5,-1.5v-2z"/><path d="M203.0,321.5h2l1.5,1.5v2l-1.5,1.5h-2l-1.5,-1.5v-2z"/><path d="M206.0,320.0h2l1.5,1.5v2l-1.5,1.5h-2l-1.5,-1.5v-2z"/><path d="M210.5,320.5h2l1.5,1.5v2l-1.5,1.5h-2l-1.5,-1.5v-2z"/><path d="M214.5,319.5h2l1.5,1.5v2l-1.5,1.5h-2l-1.5,-1.5v-2z"/><path d="M216.5,319.0h2l1.5,1.5v2l-1.5,1.5h-2l-1.5,-1.5v-2z"/><path d="M220.5,318.5h2l1.5,1.5v2l-1.5,1.5h-2l-1.5,-1.5v-2z"/><path d="M223.0,319.0h2l1.5,1.5v2l-1.5,1.5h-2l-1.5,-1.5v-2z"/><path d="M229.5,318.5h2l1.5,1.5v2l-1.5,1.5h-2l-1.5,-1.5v-2z"/><path d="M238.0,318.0h2l1.5,1.5v2l-1.5,1.5h-2l-1.5,-1.5v-2z"/><path d="M242.5,318.5h2l1.5,1.5v2l-1.5,1.5h-2l-1.5,-1.5v-2z"/><path d="M251.5,318.0h2l1.5,1.5v2l-1.5,1.5h-2l-1.5,-1.5v-2z"/><path d="M257.5,318.0h2l1.5,1.5v2l-1.5,1.5h-2l-1.5,-1.5v-2z"/><path d="M263.5,318.0h2l1.5,1.5v2l-1.5,1.5h-2l-1.5,-1.5v-2z"/><path d="M271.0,318.0h2l1.5,1.5v2l-1.5,1.5h-2l-1.5,-1.5v-2z"/><path d="M275.5,318.5h2l1.5,1.5v2l-1.5,1.5h-2l-1.5,-1.5v-2z"/><path d="M281.5,318.5h2l1.5,1.5v2l-1.5,1.5h-2l-1.5,-1.5v-2z"/><path d="M292.0,318.5h2l1.5,1.5v2l-1.5,1.5h-2l-1.5,-1.5v-2z"/><path d="M301.0,318.0h2l1.5,1.5v2l-1.5,1.5h-2l-1.5,-1.5v-2z"/><path d="M308.5,318.5h2l1.5,1.5v2l-1.5,1.5h-2l-1.5,-1.5v-2z"/><path d="M311.0,318.5h2l1.5,1.5v2l-1.5,1.5h-2l-1.5,-1.5v-2z"/></g>
<polyline points="154.4,568.5 156.7,564.2 153.6,558 151.3,547.3 149,532 146.7,518.3 145.2,499.9 146,481.5 146,474.2 146.7,458.9 149.8,443.6 151.3,428.3 155.2,416 156.7,406.8 160.5,394.5 166.6,385.7 171.2,376.5 177.3,369.6 181.2,360.5 189.6,355.1 197.2,350.5 201.8,345.9 206.4,342.1 211,339.8 220.2,341.3 230,340.6 259,342.3 300,344.5 345.5,348.3 383,350.8 438,353.9 458.6,355 477.3,355.8 497,356.5" fill="none" stroke="#ff08ff" stroke-width="1.1"/>
<g fill="none" stroke="#ff08ff" stroke-width="1"><path d="M151.5,569.0H156.5M154.0,566.5V571.5"/><path d="M153.5,565.5H158.5M156.0,563.0V568.0"/><path d="M154.0,564.0H159.0M156.5,561.5V566.5"/><path d="M152.5,561.0H157.5M155.0,558.5V563.5"/><path d="M151.5,558.0H156.5M154.0,555.5V560.5"/><path d="M151.0,555.0H156.0M153.5,552.5V557.5"/><path d="M150.0,552.5H155.0M152.5,550.0V555.0"/><path d="M149.5,549.5H154.5M152.0,547.0V552.0"/><path d="M148.5,547.5H153.5M151.0,545.0V550.0"/><path d="M148.5,544.5H153.5M151.0,542.0V547.0"/><path d="M148.5,541.0H153.5M151.0,538.5V543.5"/><path d="M147.5,538.5H152.5M150.0,536.0V541.0"/><path d="M146.5,535.0H151.5M149.0,532.5V537.5"/><path d="M147.5,532.0H152.5M150.0,529.5V534.5"/><path d="M146.5,529.5H151.5M149.0,527.0V532.0"/><path d="M146.5,526.5H151.5M149.0,524.0V529.0"/><path d="M146.0,523.5H151.0M148.5,521.0V526.0"/><path d="M144.5,521.5H149.5M147.0,519.0V524.0"/><path d="M143.5,518.0H148.5M146.0,515.5V520.5"/><path d="M143.0,515.5H148.0M145.5,513.0V518.0"/><path d="M143.5,513.0H148.5M146.0,510.5V515.5"/><path d="M144.5,509.5H149.5M147.0,507.0V512.0"/><path d="M144.0,506.5H149.0M146.5,504.0V509.0"/><path d="M143.0,504.0H148.0M145.5,501.5V506.5"/><path d="M143.0,501.0H148.0M145.5,498.5V503.5"/><path d="M142.5,498.0H147.5M145.0,495.5V500.5"/><path d="M142.0,494.5H147.0M144.5,492.0V497.0"/><path d="M142.5,492.0H147.5M145.0,489.5V494.5"/><path d="M143.0,489.5H148.0M145.5,487.0V492.0"/><path d="M144.0,486.5H149.0M146.5,484.0V489.0"/><path d="M144.0,483.5H149.0M146.5,481.0V486.0"/><path d="M143.5,481.0H148.5M146.0,478.5V483.5"/><path d="M143.5,478.0H148.5M146.0,475.5V480.5"/><path d="M143.5,475.0H148.5M146.0,472.5V477.5"/><path d="M144.0,472.0H149.0M146.5,469.5V474.5"/><path d="M144.0,468.5H149.0M146.5,466.0V471.0"/><path d="M144.0,466.5H149.0M146.5,464.0V469.0"/><path d="M143.0,463.0H148.0M145.5,460.5V465.5"/><path d="M144.5,460.5H149.5M147.0,458.0V463.0"/><path d="M145.5,457.0H150.5M148.0,454.5V459.5"/><path d="M146.0,454.5H151.0M148.5,452.0V457.0"/><path d="M146.0,452.0H151.0M148.5,449.5V454.5"/><path d="M146.5,448.5H151.5M149.0,446.0V451.0"/><path d="M147.5,446.5H152.5M150.0,444.0V449.0"/><path d="M147.0,443.5H152.0M149.5,441.0V446.0"/><path d="M148.0,440.5H153.0M150.5,438.0V443.0"/><path d="M148.0,437.0H153.0M150.5,434.5V439.5"/><path d="M147.5,434.5H152.5M150.0,432.0V437.0"/><path d="M149.5,431.5H154.5M152.0,429.0V434.0"/><path d="M148.0,429.0H153.0M150.5,426.5V431.5"/><path d="M148.5,426.0H153.5M151.0,423.5V428.5"/><path d="M150.0,423.0H155.0M152.5,420.5V425.5"/><path d="M151.5,420.5H156.5M154.0,418.0V423.0"/><path d="M152.0,417.5H157.0M154.5,415.0V420.0"/><path d="M152.0,415.5H157.0M154.5,413.0V418.0"/><path d="M153.5,411.5H158.5M156.0,409.0V414.0"/><path d="M154.0,409.5H159.0M156.5,407.0V412.0"/><path d="M154.5,406.5H159.5M157.0,404.0V409.0"/><path d="M155.5,403.5H160.5M158.0,401.0V406.0"/><path d="M156.5,400.5H161.5M159.0,398.0V403.0"/><path d="M156.0,398.0H161.0M158.5,395.5V400.5"/><path d="M157.5,394.0H162.5M160.0,391.5V396.5"/><path d="M159.5,391.5H164.5M162.0,389.0V394.0"/><path d="M163.0,388.0H168.0M165.5,385.5V390.5"/><path d="M164.0,385.0H169.0M166.5,382.5V387.5"/><path d="M166.0,382.0H171.0M168.5,379.5V384.5"/><path d="M168.0,378.0H173.0M170.5,375.5V380.5"/><path d="M171.0,374.5H176.0M173.5,372.0V377.0"/><path d="M172.5,372.0H177.5M175.0,369.5V374.5"/><path d="M175.0,369.0H180.0M177.5,366.5V371.5"/><path d="M176.5,366.0H181.5M179.0,363.5V368.5"/><path d="M178.0,362.5H183.0M180.5,360.0V365.0"/><path d="M180.0,360.0H185.0M182.5,357.5V362.5"/><path d="M184.0,358.0H189.0M186.5,355.5V360.5"/><path d="M187.0,355.0H192.0M189.5,352.5V357.5"/><path d="M190.5,354.0H195.5M193.0,351.5V356.5"/><path d="M193.0,351.5H198.0M195.5,349.0V354.0"/><path d="M197.0,349.5H202.0M199.5,347.0V352.0"/><path d="M199.5,346.0H204.5M202.0,343.5V348.5"/><path d="M201.5,344.0H206.5M204.0,341.5V346.5"/><path d="M204.5,342.0H209.5M207.0,339.5V344.5"/><path d="M208.0,340.5H213.0M210.5,338.0V343.0"/><path d="M212.0,340.0H217.0M214.5,337.5V342.5"/><path d="M215.0,341.0H220.0M217.5,338.5V343.5"/><path d="M219.5,341.0H224.5M222.0,338.5V343.5"/><path d="M224.5,341.0H229.5M227.0,338.5V343.5"/><path d="M231.0,341.0H236.0M233.5,338.5V343.5"/><path d="M240.5,341.0H245.5M243.0,338.5V343.5"/><path d="M247.0,342.0H252.0M249.5,339.5V344.5"/><path d="M257.0,342.5H262.0M259.5,340.0V345.0"/><path d="M268.0,343.0H273.0M270.5,340.5V345.5"/><path d="M281.5,344.0H286.5M284.0,341.5V346.5"/><path d="M297.5,344.0H302.5M300.0,341.5V346.5"/><path d="M319.5,346.0H324.5M322.0,343.5V348.5"/><path d="M346.0,348.5H351.0M348.5,346.0V351.0"/><path d="M357.5,349.5H362.5M360.0,347.0V352.0"/><path d="M376.5,350.5H381.5M379.0,348.0V353.0"/><path d="M399.0,352.0H404.0M401.5,349.5V354.5"/><path d="M426.0,353.0H431.0M428.5,350.5V355.5"/><path d="M444.5,354.0H449.5M447.0,351.5V356.5"/><path d="M463.5,355.5H468.5M466.0,353.0V358.0"/><path d="M482.5,356.0H487.5M485.0,353.5V358.5"/><path d="M494.5,356.5H499.5M497.0,354.0V359.0"/></g>
<polyline points="150.6,568.5 147.5,559.6 146.7,548.9 144.4,532 142.1,513.7 140.6,495.3 141.4,481.5 141.4,475.7 142.1,461.9 144.4,446.6 146,432.9 148.3,419 151.3,406.8 155.5,394.5 162.8,382.7 168.9,368.9 172.8,363.5 178.9,357.4 186.5,349 193.4,343.6 200.3,339.8 208,336 211,338.3 220.2,339 230,338.6 251.4,340 282.7,343 314,345.6 345.5,348.3 383,350.4 420,352.7 445,354.8" fill="none" stroke="#08a8b8" stroke-width="1.1"/>
<g fill="none" stroke="#08a8b8" stroke-width="1"><path d="M147.8,566.3L152.2,570.7M147.8,570.7L152.2,566.3"/><path d="M146.8,563.8L151.2,568.2M146.8,568.2L151.2,563.8"/><path d="M146.3,560.8L150.7,565.2M146.3,565.2L150.7,560.8"/><path d="M145.3,557.8L149.7,562.2M145.3,562.2L149.7,557.8"/><path d="M144.3,554.8L148.7,559.2M144.3,559.2L148.7,554.8"/><path d="M144.8,552.8L149.2,557.2M144.8,557.2L149.2,552.8"/><path d="M144.8,548.8L149.2,553.2M144.8,553.2L149.2,548.8"/><path d="M144.3,546.8L148.7,551.2M144.3,551.2L148.7,546.8"/><path d="M144.3,543.8L148.7,548.2M144.3,548.2L148.7,543.8"/><path d="M143.8,540.3L148.2,544.7M143.8,544.7L148.2,540.3"/><path d="M142.3,537.8L146.7,542.2M142.3,542.2L146.7,537.8"/><path d="M142.3,534.8L146.7,539.2M142.3,539.2L146.7,534.8"/><path d="M143.3,532.3L147.7,536.7M143.3,536.7L147.7,532.3"/><path d="M142.3,528.8L146.7,533.2M142.3,533.2L146.7,528.8"/><path d="M141.3,526.3L145.7,530.7M141.3,530.7L145.7,526.3"/><path d="M141.3,523.8L145.7,528.2M141.3,528.2L145.7,523.8"/><path d="M141.8,520.8L146.2,525.2M141.8,525.2L146.2,520.8"/><path d="M139.8,518.3L144.2,522.7M139.8,522.7L144.2,518.3"/><path d="M140.3,515.3L144.7,519.7M140.3,519.7L144.7,515.3"/><path d="M139.8,512.3L144.2,516.7M139.8,516.7L144.2,512.3"/><path d="M139.3,508.8L143.7,513.2M139.3,513.2L143.7,508.8"/><path d="M139.3,506.3L143.7,510.7M139.3,510.7L143.7,506.3"/><path d="M139.3,502.8L143.7,507.2M139.3,507.2L143.7,502.8"/><path d="M139.3,500.3L143.7,504.7M139.3,504.7L143.7,500.3"/><path d="M137.8,497.8L142.2,502.2M137.8,502.2L142.2,497.8"/><path d="M138.8,495.3L143.2,499.7M138.8,499.7L143.2,495.3"/><path d="M138.3,492.3L142.7,496.7M138.3,496.7L142.7,492.3"/><path d="M138.3,488.8L142.7,493.2M138.3,493.2L142.7,488.8"/><path d="M138.8,486.3L143.2,490.7M138.8,490.7L143.2,486.3"/><path d="M138.8,483.3L143.2,487.7M138.8,487.7L143.2,483.3"/><path d="M139.3,479.8L143.7,484.2M139.3,484.2L143.7,479.8"/><path d="M138.8,477.3L143.2,481.7M138.8,481.7L143.2,477.3"/><path d="M139.3,473.8L143.7,478.2M139.3,478.2L143.7,473.8"/><path d="M138.3,471.3L142.7,475.7M138.3,475.7L142.7,471.3"/><path d="M139.3,468.8L143.7,473.2M139.3,473.2L143.7,468.8"/><path d="M139.8,466.3L144.2,470.7M139.8,470.7L144.2,466.3"/><path d="M140.3,463.3L144.7,467.7M140.3,467.7L144.7,463.3"/><path d="M139.8,460.3L144.2,464.7M139.8,464.7L144.2,460.3"/><path d="M140.3,456.8L144.7,461.2M140.3,461.2L144.7,456.8"/><path d="M141.3,453.8L145.7,458.2M141.3,458.2L145.7,453.8"/><path d="M140.3,451.3L144.7,455.7M140.3,455.7L144.7,451.3"/><path d="M141.3,448.8L145.7,453.2M141.3,453.2L145.7,448.8"/><path d="M142.8,445.8L147.2,450.2M142.8,450.2L147.2,445.8"/><path d="M142.3,442.3L146.7,446.7M142.3,446.7L146.7,442.3"/><path d="M142.8,439.8L147.2,444.2M142.8,444.2L147.2,439.8"/><path d="M143.8,437.3L148.2,441.7M143.8,441.7L148.2,437.3"/><path d="M143.3,434.3L147.7,438.7M143.3,438.7L147.7,434.3"/><path d="M144.3,430.8L148.7,435.2M144.3,435.2L148.7,430.8"/><path d="M144.3,427.8L148.7,432.2M144.3,432.2L148.7,427.8"/><path d="M143.8,425.8L148.2,430.2M143.8,430.2L148.2,425.8"/><path d="M144.8,422.8L149.2,427.2M144.8,427.2L149.2,422.8"/><path d="M145.8,420.3L150.2,424.7M145.8,424.7L150.2,420.3"/><path d="M145.8,416.3L150.2,420.7M145.8,420.7L150.2,416.3"/><path d="M146.8,413.8L151.2,418.2M146.8,418.2L151.2,413.8"/><path d="M147.3,411.3L151.7,415.7M147.3,415.7L151.7,411.3"/><path d="M147.3,408.3L151.7,412.7M147.3,412.7L151.7,408.3"/><path d="M148.8,405.8L153.2,410.2M148.8,410.2L153.2,405.8"/><path d="M148.8,402.8L153.2,407.2M148.8,407.2L153.2,402.8"/><path d="M151.3,400.3L155.7,404.7M151.3,404.7L155.7,400.3"/><path d="M151.8,396.8L156.2,401.2M151.8,401.2L156.2,396.8"/><path d="M152.8,393.8L157.2,398.2M152.8,398.2L157.2,393.8"/><path d="M154.3,389.8L158.7,394.2M154.3,394.2L158.7,389.8"/><path d="M157.3,387.3L161.7,391.7M157.3,391.7L161.7,387.3"/><path d="M158.8,384.3L163.2,388.7M158.8,388.7L163.2,384.3"/><path d="M159.8,380.8L164.2,385.2M159.8,385.2L164.2,380.8"/><path d="M162.3,376.8L166.7,381.2M162.3,381.2L166.7,376.8"/><path d="M163.8,373.8L168.2,378.2M163.8,378.2L168.2,373.8"/><path d="M164.8,370.3L169.2,374.7M164.8,374.7L169.2,370.3"/><path d="M166.8,367.3L171.2,371.7M166.8,371.7L171.2,367.3"/><path d="M168.3,363.8L172.7,368.2M168.3,368.2L172.7,363.8"/><path d="M171.8,360.3L176.2,364.7M171.8,364.7L176.2,360.3"/><path d="M173.8,357.8L178.2,362.2M173.8,362.2L178.2,357.8"/><path d="M176.3,354.8L180.7,359.2M176.3,359.2L180.7,354.8"/><path d="M179.3,352.3L183.7,356.7M179.3,356.7L183.7,352.3"/><path d="M181.8,350.3L186.2,354.7M181.8,354.7L186.2,350.3"/><path d="M183.3,346.8L187.7,351.2M183.3,351.2L187.7,346.8"/><path d="M186.8,344.8L191.2,349.2M186.8,349.2L191.2,344.8"/><path d="M189.8,341.8L194.2,346.2M189.8,346.2L194.2,341.8"/><path d="M192.8,339.8L197.2,344.2M192.8,344.2L197.2,339.8"/><path d="M195.8,338.8L200.2,343.2M195.8,343.2L200.2,338.8"/><path d="M199.8,336.8L204.2,341.2M199.8,341.2L204.2,336.8"/><path d="M204.3,334.3L208.7,338.7M204.3,338.7L208.7,334.3"/><path d="M207.3,334.3L211.7,338.7M207.3,338.7L211.7,334.3"/><path d="M209.8,336.3L214.2,340.7M209.8,340.7L214.2,336.3"/><path d="M214.3,336.3L218.7,340.7M214.3,340.7L218.7,336.3"/><path d="M219.3,336.3L223.7,340.7M219.3,340.7L223.7,336.3"/><path d="M224.3,336.8L228.7,341.2M224.3,341.2L228.7,336.8"/><path d="M227.8,336.3L232.2,340.7M227.8,340.7L232.2,336.3"/><path d="M234.3,336.8L238.7,341.2M234.3,341.2L238.7,336.8"/><path d="M240.3,336.8L244.7,341.2M240.3,341.2L244.7,336.8"/><path d="M247.8,337.8L252.2,342.2M247.8,342.2L252.2,337.8"/><path d="M260.3,338.8L264.7,343.2M260.3,343.2L264.7,338.8"/><path d="M275.8,340.3L280.2,344.7M275.8,344.7L280.2,340.3"/><path d="M288.8,341.3L293.2,345.7M288.8,345.7L293.2,341.3"/><path d="M311.3,343.3L315.7,347.7M311.3,347.7L315.7,343.3"/><path d="M336.3,345.3L340.7,349.7M336.3,349.7L340.7,345.3"/><path d="M361.3,346.8L365.7,351.2M361.3,351.2L365.7,346.8"/><path d="M374.3,347.8L378.7,352.2M374.3,352.2L378.7,347.8"/><path d="M395.3,349.3L399.7,353.7M395.3,353.7L399.7,349.3"/><path d="M411.8,349.8L416.2,354.2M411.8,354.2L416.2,349.8"/><path d="M428.8,351.3L433.2,355.7M428.8,355.7L433.2,351.3"/><path d="M442.8,352.8L447.2,357.2M442.8,357.2L447.2,352.8"/></g>
</g>
<rect x="385" y="302" width="112" height="52" fill="#fdfdbe"/>
<rect x="385" y="302" width="1" height="52" fill="#fff"/><rect x="385" y="302" width="112" height="1" fill="#fff"/>
<rect x="496" y="302" width="1" height="52" fill="#b4b48c"/><rect x="385" y="353" width="112" height="1" fill="#b4b48c"/>
<g shape-rendering="auto">
<line x1="389.5" y1="308.7" x2="405.5" y2="308.7" stroke="#08a808" stroke-width="1"/>
<g fill="none" stroke="#08a808" stroke-width="1"><rect x="389.3" y="306.3" width="4.4" height="4.4"/><rect x="401.3" y="306.3" width="4.4" height="4.4"/></g>
</g>
<text x="409" y="311.7" font-size="9.3" font-weight="normal" fill="#08a808" text-anchor="start" textLength="82" lengthAdjust="spacingAndGlyphs" >Re = 1800000, r = 3</text>
<g shape-rendering="auto">
<line x1="389.5" y1="320.59999999999997" x2="405.5" y2="320.59999999999997" stroke="#fa0505" stroke-width="1"/>
<g fill="none" stroke="#fa0505" stroke-width="1"><path d="M390.5,318.0h2l1.5,1.5v2l-1.5,1.5h-2l-1.5,-1.5v-2z"/><path d="M402.5,318.0h2l1.5,1.5v2l-1.5,1.5h-2l-1.5,-1.5v-2z"/></g>
</g>
<text x="409" y="323.59999999999997" font-size="9.3" font-weight="normal" fill="#fa0505" text-anchor="start" textLength="59.4" lengthAdjust="spacingAndGlyphs" >2600000, r = 3</text>
<g shape-rendering="auto">
<line x1="389.5" y1="332.5" x2="405.5" y2="332.5" stroke="#ff08ff" stroke-width="1"/>
<g fill="none" stroke="#ff08ff" stroke-width="1"><path d="M389.0,332.5H394.0M391.5,330.0V335.0"/><path d="M401.0,332.5H406.0M403.5,330.0V335.0"/></g>
</g>
<text x="409" y="335.5" font-size="9.3" font-weight="normal" fill="#ff08ff" text-anchor="start" textLength="59.4" lengthAdjust="spacingAndGlyphs" >1800000, r = 3</text>
<g shape-rendering="auto">
<line x1="389.5" y1="344.4" x2="405.5" y2="344.4" stroke="#08a8b8" stroke-width="1"/>
<g fill="none" stroke="#08a8b8" stroke-width="1"><path d="M389.3,342.3L393.7,346.7M389.3,346.7L393.7,342.3"/><path d="M401.3,342.3L405.7,346.7M401.3,346.7L405.7,342.3"/></g>
</g>
<text x="409" y="347.4" font-size="9.3" font-weight="normal" fill="#08a8b8" text-anchor="start" textLength="59.4" lengthAdjust="spacingAndGlyphs" >2600000, r = 3</text>
<rect x="162" y="302" width="263" height="16" fill="#fdfdbe"/>
<rect x="162" y="302" width="263" height="1" fill="#fff"/><rect x="162" y="302" width="1" height="16" fill="#fff"/>
<rect x="424" y="302" width="1" height="16" fill="#b4b48c"/><rect x="162" y="317" width="263" height="1" fill="#b4b48c"/>
<text x="164" y="314.5" font-size="11" font-weight="bold" fill="#000" text-anchor="start" textLength="254.5" lengthAdjust="spacingAndGlyphs" xml:space="preserve">NACA 8-H-12   12%, NACA 0012   12%  откр 0,35%</text>
<rect x="627" y="298" width="1" height="321" fill="#b9b9c6"/>
<rect x="708" y="298" width="1" height="321" fill="#b9b9c6"/>
<rect x="749" y="298" width="1" height="321" fill="#b9b9c6"/>
<rect x="789" y="298" width="1" height="321" fill="#b9b9c6"/>
<rect x="587" y="338" width="243" height="1" fill="#b9b9c6"/>
<rect x="587" y="378" width="243" height="1" fill="#b9b9c6"/>
<rect x="587" y="418" width="243" height="1" fill="#b9b9c6"/>
<rect x="587" y="498" width="243" height="1" fill="#b9b9c6"/>
<rect x="587" y="538" width="243" height="1" fill="#b9b9c6"/>
<rect x="587" y="578" width="243" height="1" fill="#b9b9c6"/>
<rect x="587" y="298" width="244" height="1" fill="#000"/>
<rect x="587" y="619" width="244" height="1" fill="#000"/>
<rect x="587" y="298" width="1" height="322" fill="#000"/>
<rect x="830" y="298" width="1" height="322" fill="#000"/>
<rect x="668" y="298" width="2" height="322" fill="#000"/>
<rect x="587" y="458" width="244" height="2" fill="#000"/>
<rect x="666" y="298" width="2" height="1" fill="#000"/>
<text transform="translate(662.5,301) scale(0.94,1)" font-size="9.6" font-weight="normal" fill="#000" text-anchor="end" >0,2</text>
<rect x="666" y="378" width="2" height="1" fill="#000"/>
<text transform="translate(662.5,381) scale(0.94,1)" font-size="9.6" font-weight="normal" fill="#000" text-anchor="end" >0,1</text>
<rect x="666" y="458" width="2" height="1" fill="#000"/>
<text transform="translate(662.5,461) scale(0.94,1)" font-size="9.6" font-weight="normal" fill="#000" text-anchor="end" >0,0</text>
<rect x="666" y="538" width="2" height="1" fill="#000"/>
<text transform="translate(662.5,541) scale(0.94,1)" font-size="9.6" font-weight="normal" fill="#000" text-anchor="end" >-0,1</text>
<rect x="666" y="619" width="2" height="1" fill="#000"/>
<text transform="translate(662.5,622) scale(0.94,1)" font-size="9.6" font-weight="normal" fill="#000" text-anchor="end" >-0,2</text>
<text transform="translate(587,470.5) scale(0.94,1)" font-size="9.6" font-weight="normal" fill="#000" text-anchor="middle" textLength="21.7" lengthAdjust="spacingAndGlyphs" >-10,0</text>
<text transform="translate(668.5,470.5) scale(0.94,1)" font-size="9.6" font-weight="normal" fill="#000" text-anchor="middle" textLength="12.77" lengthAdjust="spacingAndGlyphs" >0,0</text>
<text transform="translate(749,470.5) scale(0.94,1)" font-size="9.6" font-weight="normal" fill="#000" text-anchor="middle" textLength="17.55" lengthAdjust="spacingAndGlyphs" >10,0</text>
<text transform="translate(829.5,470.5) scale(0.94,1)" font-size="9.6" font-weight="normal" fill="#000" text-anchor="middle" textLength="18.09" lengthAdjust="spacingAndGlyphs" >20,0</text>
<text transform="translate(672.5,307) scale(0.94,1)" font-size="9.6" font-weight="normal" fill="#000" text-anchor="start" >Cm 0.25</text>
<text x="821" y="453.5" font-size="8" font-weight="normal" fill="#000" text-anchor="start" >α</text>
<polyline points="625.5,451.8 720,467.8 749.4,472.7 760,474.3 771,475.2 782,474.8 792,473.8" fill="none" stroke="#d040f0" stroke-width="5.6" stroke-linecap="butt" shape-rendering="auto"/>
<polyline points="625.5,451.8 720,467.8 749.4,472.7 760,474.3 771,475.2 782,474.8 792,473.8" fill="none" stroke="#12a6b6" stroke-width="4.6" stroke-linecap="butt" shape-rendering="auto"/>
<g fill="#d848f8"><rect x="626" y="449" width="1" height="1"/><rect x="628" y="453" width="1" height="1"/><rect x="630" y="452" width="1" height="1"/><rect x="633" y="455" width="1" height="1"/><rect x="635" y="451" width="1" height="1"/><rect x="638" y="454" width="1" height="1"/><rect x="640" y="456" width="1" height="1"/><rect x="643" y="452" width="1" height="1"/><rect x="645" y="452" width="1" height="1"/><rect x="648" y="457" width="1" height="1"/><rect x="650" y="455" width="1" height="1"/><rect x="653" y="458" width="1" height="1"/><rect x="655" y="455" width="1" height="1"/><rect x="658" y="457" width="1" height="1"/><rect x="660" y="460" width="1" height="1"/><rect x="662" y="455" width="1" height="1"/><rect x="665" y="455" width="1" height="1"/><rect x="667" y="460" width="1" height="1"/><rect x="670" y="458" width="1" height="1"/><rect x="672" y="462" width="1" height="1"/><rect x="675" y="458" width="1" height="1"/><rect x="677" y="461" width="1" height="1"/><rect x="680" y="463" width="1" height="1"/><rect x="682" y="458" width="1" height="1"/><rect x="685" y="459" width="1" height="1"/><rect x="687" y="463" width="1" height="1"/><rect x="690" y="462" width="1" height="1"/><rect x="692" y="465" width="1" height="1"/><rect x="695" y="461" width="1" height="1"/><rect x="697" y="464" width="1" height="1"/><rect x="699" y="466" width="1" height="1"/><rect x="702" y="462" width="1" height="1"/><rect x="704" y="462" width="1" height="1"/><rect x="707" y="467" width="1" height="1"/><rect x="709" y="465" width="1" height="1"/><rect x="712" y="468" width="1" height="1"/><rect x="714" y="465" width="1" height="1"/><rect x="717" y="467" width="1" height="1"/><rect x="719" y="470" width="1" height="1"/><rect x="722" y="465" width="1" height="1"/><rect x="724" y="465" width="1" height="1"/><rect x="727" y="470" width="1" height="1"/><rect x="729" y="468" width="1" height="1"/><rect x="731" y="472" width="1" height="1"/><rect x="734" y="468" width="1" height="1"/><rect x="736" y="471" width="1" height="1"/><rect x="739" y="473" width="1" height="1"/><rect x="741" y="468" width="1" height="1"/><rect x="744" y="469" width="1" height="1"/><rect x="746" y="473" width="1" height="1"/><rect x="749" y="472" width="1" height="1"/><rect x="751" y="475" width="1" height="1"/><rect x="754" y="471" width="1" height="1"/><rect x="756" y="474" width="1" height="1"/><rect x="759" y="476" width="1" height="1"/><rect x="761" y="471" width="1" height="1"/><rect x="764" y="472" width="1" height="1"/><rect x="766" y="476" width="1" height="1"/><rect x="769" y="474" width="1" height="1"/><rect x="771" y="477" width="1" height="1"/><rect x="774" y="473" width="1" height="1"/><rect x="776" y="475" width="1" height="1"/><rect x="779" y="477" width="1" height="1"/><rect x="781" y="472" width="1" height="1"/><rect x="784" y="472" width="1" height="1"/><rect x="786" y="475" width="1" height="1"/><rect x="789" y="473" width="1" height="1"/><rect x="791" y="476" width="1" height="1"/><rect x="792" y="472" width="1" height="1"/></g>
<g fill="none" stroke="#c050f0" stroke-width="1" shape-rendering="crispEdges"><path d="M787,471.5l4,4m0,-4l-4,4M624.5,449.5l4,4m0,-4l-4,4"/></g>
<polyline points="625.5,439.5 792,468.5" fill="none" stroke="#f01010" stroke-width="5.4" stroke-linecap="butt" shape-rendering="auto"/>
<g fill="#30b030"><rect x="626" y="439" width="1" height="1"/><rect x="629" y="440" width="1" height="1"/><rect x="633" y="440" width="1" height="1"/><rect x="637" y="442" width="1" height="1"/><rect x="641" y="441" width="1" height="1"/><rect x="645" y="443" width="1" height="1"/><rect x="649" y="443" width="1" height="1"/><rect x="653" y="444" width="1" height="1"/><rect x="657" y="444" width="1" height="1"/><rect x="661" y="446" width="1" height="1"/><rect x="665" y="445" width="1" height="1"/><rect x="669" y="447" width="1" height="1"/><rect x="673" y="447" width="1" height="1"/><rect x="677" y="448" width="1" height="1"/><rect x="681" y="448" width="1" height="1"/><rect x="685" y="450" width="1" height="1"/><rect x="689" y="449" width="1" height="1"/><rect x="692" y="451" width="1" height="1"/><rect x="696" y="451" width="1" height="1"/><rect x="700" y="453" width="1" height="1"/><rect x="704" y="452" width="1" height="1"/><rect x="708" y="454" width="1" height="1"/><rect x="712" y="454" width="1" height="1"/><rect x="716" y="455" width="1" height="1"/><rect x="720" y="455" width="1" height="1"/><rect x="724" y="457" width="1" height="1"/><rect x="728" y="456" width="1" height="1"/><rect x="732" y="458" width="1" height="1"/><rect x="736" y="458" width="1" height="1"/><rect x="740" y="459" width="1" height="1"/><rect x="744" y="459" width="1" height="1"/><rect x="748" y="461" width="1" height="1"/><rect x="752" y="460" width="1" height="1"/><rect x="756" y="462" width="1" height="1"/><rect x="759" y="462" width="1" height="1"/><rect x="763" y="464" width="1" height="1"/><rect x="767" y="463" width="1" height="1"/><rect x="771" y="465" width="1" height="1"/><rect x="775" y="465" width="1" height="1"/><rect x="779" y="466" width="1" height="1"/><rect x="783" y="466" width="1" height="1"/><rect x="787" y="468" width="1" height="1"/><rect x="791" y="467" width="1" height="1"/><rect x="792" y="468" width="1" height="1"/></g>
<rect x="626" y="437.5" width="3" height="4" fill="#fdfdb2" stroke="#f01010" stroke-width="0.8" shape-rendering="auto"/>
<rect x="789" y="466.3" width="3" height="4" fill="#fdfdb2" stroke="#f01010" stroke-width="0.8" shape-rendering="auto"/>
</svg>
</body></html>
